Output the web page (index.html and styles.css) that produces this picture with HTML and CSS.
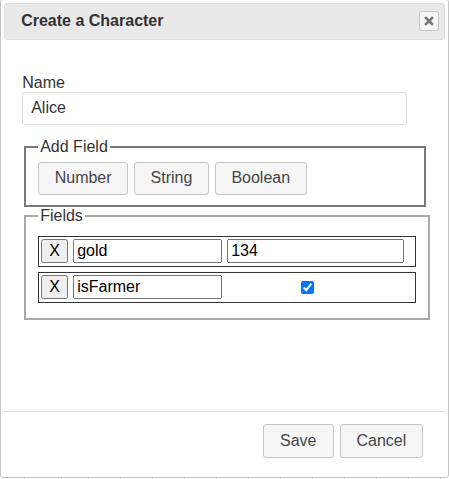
FILE: index.html
```html
<!DOCTYPE html>
<html lang="en">
<head>
<meta charset="utf-8">
<title>Create a Character</title>
<link rel="stylesheet" href="styles.css">
</head>
<body>
<div class="dialog">
  <div class="titlebar">
    <span class="title">Create a Character</span>
    <button class="close" title="Close"><svg width="16" height="16" viewBox="0 0 16 16"><path d="M5 5L11 11M11 5L5 11" stroke="#777" stroke-width="2.6" stroke-linecap="square" fill="none"/></svg></button>
  </div>
  <div class="content">
    <label class="name-label" for="name">Name</label>
    <input id="name" class="name-input" value="Alice">
    <fieldset class="add-field">
      <legend>Add Field</legend>
      <div class="btn-group">
        <button class="ui-btn">Number</button>
        <button class="ui-btn">String</button>
        <button class="ui-btn">Boolean</button>
      </div>
    </fieldset>
    <fieldset class="fields">
      <legend>Fields</legend>
      <div class="row">
        <button class="remove">X</button>
        <input class="key" value="gold">
        <input class="val" value="134">
      </div>
      <div class="row">
        <button class="remove">X</button>
        <input class="key" value="isFarmer">
        <span class="val-cell"><input class="check" type="checkbox" checked></span>
      </div>
    </fieldset>
  </div>
  <div class="buttonpane"><button class="ui-btn pane-btn">Save</button><button class="ui-btn pane-btn">Cancel</button></div>
</div>
<div class="backdrop">
  <span class="cell first"></span><span class="cell w37"></span><span class="cell w27"></span><span class="cell"></span><span class="cell"></span><span class="cell"></span><span class="cell"></span><span class="cell"></span><span class="cell"></span><span class="cell"></span><span class="cell"></span><span class="cell"></span><span class="cell"></span><span class="cell"></span><span class="cell last"></span>
</div>
</body>
</html>
```
FILE: styles.css
```css
html, body {
  margin: 0;
  padding: 0;
  background: #fff;
  overflow: hidden;
}

.dialog {
  width: 449px;
  box-sizing: border-box;
  margin-top: -1px;
  border: 1px solid #c5c5c5;
  border-radius: 3px;
  padding: 3.2px;
  background: #fff;
  font-family: "Liberation Sans", Arial, sans-serif;
  font-size: 16px;
  line-height: 1.15;
  color: #333;
}

.titlebar {
  position: relative;
  padding: 6.4px 16px;
  border: 1px solid #ddd;
  border-radius: 3px;
  background: #e9e9e9;
  color: #333;
  font-weight: bold;
}

.title {
  display: block;
  margin: 1.6px 0;
  white-space: nowrap;
}

.close {
  position: absolute;
  right: 4.8px;
  top: 50%;
  margin: -10px 0 0 0;
  width: 20px;
  height: 20px;
  box-sizing: border-box;
  padding: 0;
  border: 1px solid #c5c5c5;
  border-radius: 3px;
  background: #f6f6f6;
  display: flex;
  align-items: center;
  justify-content: center;
}

.content {
  height: 363px;
  box-sizing: border-box;
  padding: 8px 17px 8px 18px;
}

.name-label {
  display: block;
  margin-top: 26px;
}

.name-input {
  display: block;
  width: 385px;
  height: 33px;
  box-sizing: border-box;
  margin: 0;
  padding: 0 8px;
  border: 1px solid #ddd;
  border-radius: 3px;
  font: inherit;
  color: #333;
  background: #fff;
}

fieldset {
  margin: 0 2px;
  padding: 5.6px 12px 10px;
}

legend {
  padding: 0 2px;
  line-height: 1.15;
}

.add-field {
  margin-top: 13px;
  border: 2px solid #7a7a7a;
}

.fields {
  margin-top: 0;
  border: 2px solid #a8a8a8;
}

.btn-group {
  display: flex;
  gap: 6px;
}

.ui-btn {
  padding: 6.4px 15.5px;
  margin: 0;
  border: 1px solid #c5c5c5;
  border-radius: 3px;
  background: #f6f6f6;
  color: #454545;
  font: inherit;
  line-height: 1.15;
}

.row {
  width: 378px;
  box-sizing: border-box;
  margin: 5px 0;
  border: 1px solid #333;
  padding: 2px 2px 3px;
  display: flex;
  align-items: center;
  gap: 5px;
}

.remove {
  width: 27px;
  height: 24px;
  margin: 0;
  padding: 0;
  font: inherit;
}

.key,
.val {
  height: 24px;
  box-sizing: border-box;
  margin: 0;
  font: inherit;
}

.key {
  width: 149px;
}

.val {
  width: 177px;
}

.val-cell {
  width: 177px;
  display: flex;
  align-items: center;
}

.check {
  margin: 0 0 0 74px;
  width: 13px;
  height: 13px;
}

.buttonpane {
  margin-top: 8px;
  border-top: 1px solid #ddd;
  padding: 4.8px 15.5px 8px 6.4px;
  display: flex;
  justify-content: flex-end;
}

.pane-btn {
  margin: 8px 6px 8px 0;
  padding: 6.4px 16px;
}

.backdrop {
  display: flex;
  height: 10px;
}

.cell {
  width: 31px;
  border-left: 1px solid #c8c8c8;
  flex: none;
}

.cell.first {
  width: 24px;
  border-left: none;
}

.cell.w37 {
  width: 36px;
}

.cell.w27 {
  width: 26px;
}

.cell.last {
  width: 8px;
}
```
